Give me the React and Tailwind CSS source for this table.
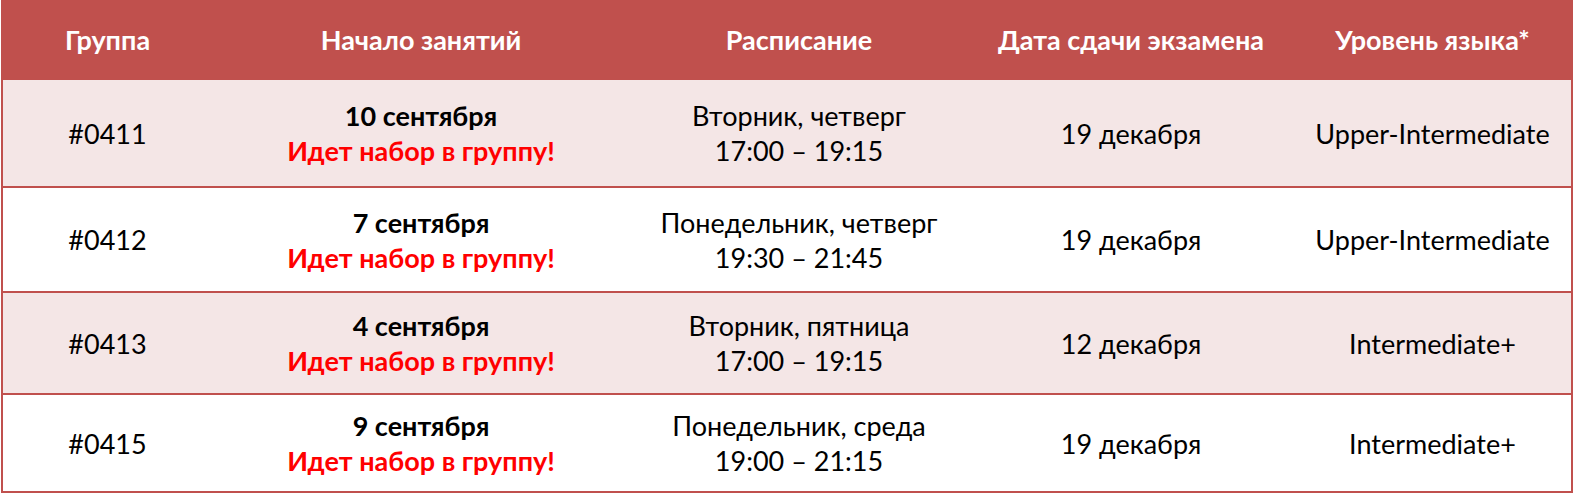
import React from "react";

const groups = [
  {
    id: "#0411",
    start: "10 сентября",
    days: "Вторник, четверг",
    time: "17:00 – 19:15",
    exam: "19 декабря",
    level: "Upper-Intermediate",
    height: "h-[106px]",
    bg: "bg-[#f4e6e6]",
  },
  {
    id: "#0412",
    start: "7 сентября",
    days: "Понедельник, четверг",
    time: "19:30 – 21:45",
    exam: "19 декабря",
    level: "Upper-Intermediate",
    height: "h-[105px]",
    bg: "bg-white",
  },
  {
    id: "#0413",
    start: "4 сентября",
    days: "Вторник, пятница",
    time: "17:00 – 19:15",
    exam: "12 декабря",
    level: "Intermediate+",
    height: "h-[102px]",
    bg: "bg-[#f4e6e6]",
  },
  {
    id: "#0415",
    start: "9 сентября",
    days: "Понедельник, среда",
    time: "19:00 – 21:15",
    exam: "19 декабря",
    level: "Intermediate+",
    height: "h-[98px]",
    bg: "bg-white",
  },
];

const cols = "grid grid-cols-[209px_418px_338px_326px_1fr]";

const App = () => {
  return (
    <div className="w-[1575px] h-[495px] bg-white font-['Lato','Open_Sans',sans-serif] text-[27px] text-black">
      <div className="ml-[1px] w-[1572px] border-2 border-t-0 border-[#c0504d]">
        <div className={`${cols} h-[80px] items-center bg-[#c0504d] text-white font-bold text-center`}>
          <div>Группа</div>
          <div>Начало занятий</div>
          <div>Расписание</div>
          <div>Дата сдачи экзамена</div>
          <div>Уровень языка*</div>
        </div>
        {groups.map((g, i) => (
          <div
            key={g.id}
            className={`${cols} ${g.height} ${g.bg} items-center text-center leading-[35px] ${
              i > 0 ? "border-t-2 border-[#c0504d]" : ""
            }`}
          >
            <div>{g.id}</div>
            <div>
              <div className="font-bold">{g.start}</div>
              <div className="font-bold text-[#ff0000]">Идет набор в группу!</div>
            </div>
            <div>
              <div>{g.days}</div>
              <div>{g.time}</div>
            </div>
            <div>{g.exam}</div>
            <div>{g.level}</div>
          </div>
        ))}
      </div>
    </div>
  );
};

export default App;
